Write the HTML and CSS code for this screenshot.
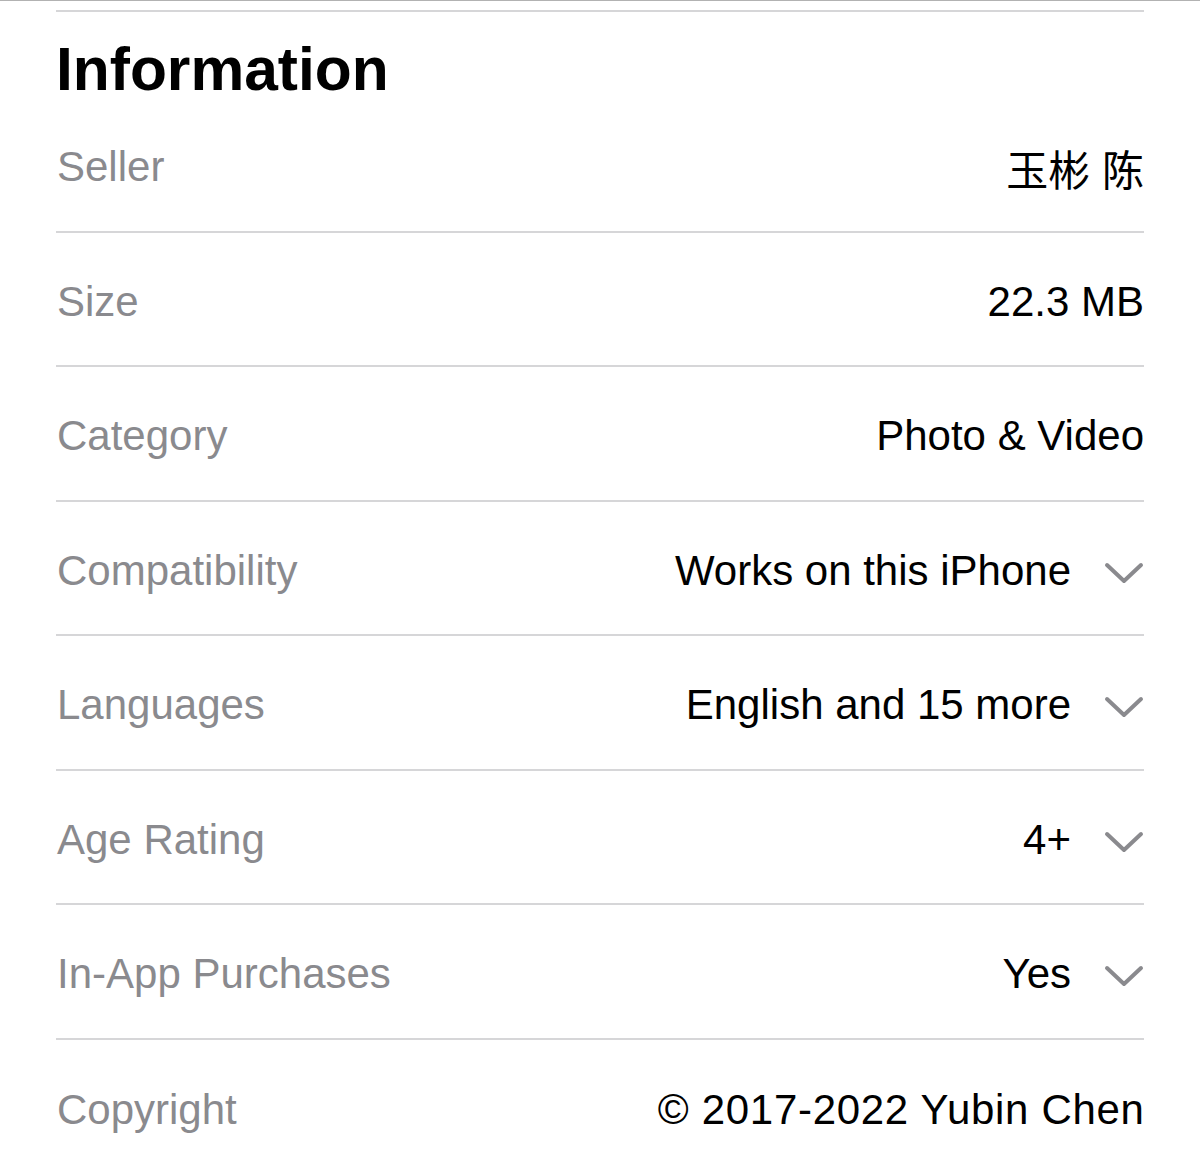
FILE: index.html
```html
<!DOCTYPE html>
<html lang="en">
<head>
<meta charset="utf-8">
<title>Information</title>
<link rel="stylesheet" href="styles.css">
</head>
<body>
<div class="topbar"></div>
<section class="info">
  <h1 class="title">Information</h1>
  <div class="row"><span class="label">Seller</span><span class="value">玉彬 陈</span></div>
  <div class="row"><span class="label">Size</span><span class="value">22.3 MB</span></div>
  <div class="row"><span class="label">Category</span><span class="value">Photo &amp; Video</span></div>
  <div class="row"><span class="label">Compatibility</span><span class="value">Works on this iPhone</span><svg class="chev" viewBox="0 0 40 22" width="40" height="22"><path d="M3 3 L20 19 L37 3"/></svg></div>
  <div class="row"><span class="label">Languages</span><span class="value">English and 15 more</span><svg class="chev" viewBox="0 0 40 22" width="40" height="22"><path d="M3 3 L20 19 L37 3"/></svg></div>
  <div class="row"><span class="label">Age Rating</span><span class="value">4+</span><svg class="chev" viewBox="0 0 40 22" width="40" height="22"><path d="M3 3 L20 19 L37 3"/></svg></div>
  <div class="row"><span class="label">In-App Purchases</span><span class="value">Yes</span><svg class="chev" viewBox="0 0 40 22" width="40" height="22"><path d="M3 3 L20 19 L37 3"/></svg></div>
  <div class="row last"><span class="label">Copyright</span><span class="value wide">© 2017-2022 Yubin Chen</span></div>
</section>
</body>
</html>
```
FILE: styles.css
```css
html, body {
  margin: 0;
  padding: 0;
  background: #fff;
}
body {
  font-family: "Liberation Sans", "Noto Sans CJK SC", sans-serif;
  color: #000;
}
.topbar {
  height: 1px;
  background: #b2b2b2;
  margin-bottom: 9px;
}
.info {
  margin: 0 56px;
  border-top: 2px solid #d6d6d8;
}
.title {
  margin: 0;
  padding-top: 29px;
  font-size: 60.5px;
  line-height: 57px;
  font-weight: 700;
}
.row {
  box-sizing: border-box;
  height: 134.5px;
  padding-top: 6px;
  display: flex;
  align-items: center;
  border-bottom: 2px solid #d6d6d8;
  font-size: 42px;
}
.row.last {
  border-bottom: none;
}
.label {
  color: #8a8a8e;
  flex: 1;
  padding-left: 1px;
}
.value {
  color: #000;
}
.value.wide {
  letter-spacing: 0.7px;
  margin-right: -0.7px;
}
.chev {
  margin-left: 33px;
  margin-top: 4px;
  flex: none;
}
.chev path {
  fill: none;
  stroke: #8a8a8e;
  stroke-width: 4;
  stroke-linecap: round;
  stroke-linejoin: round;
}
```
